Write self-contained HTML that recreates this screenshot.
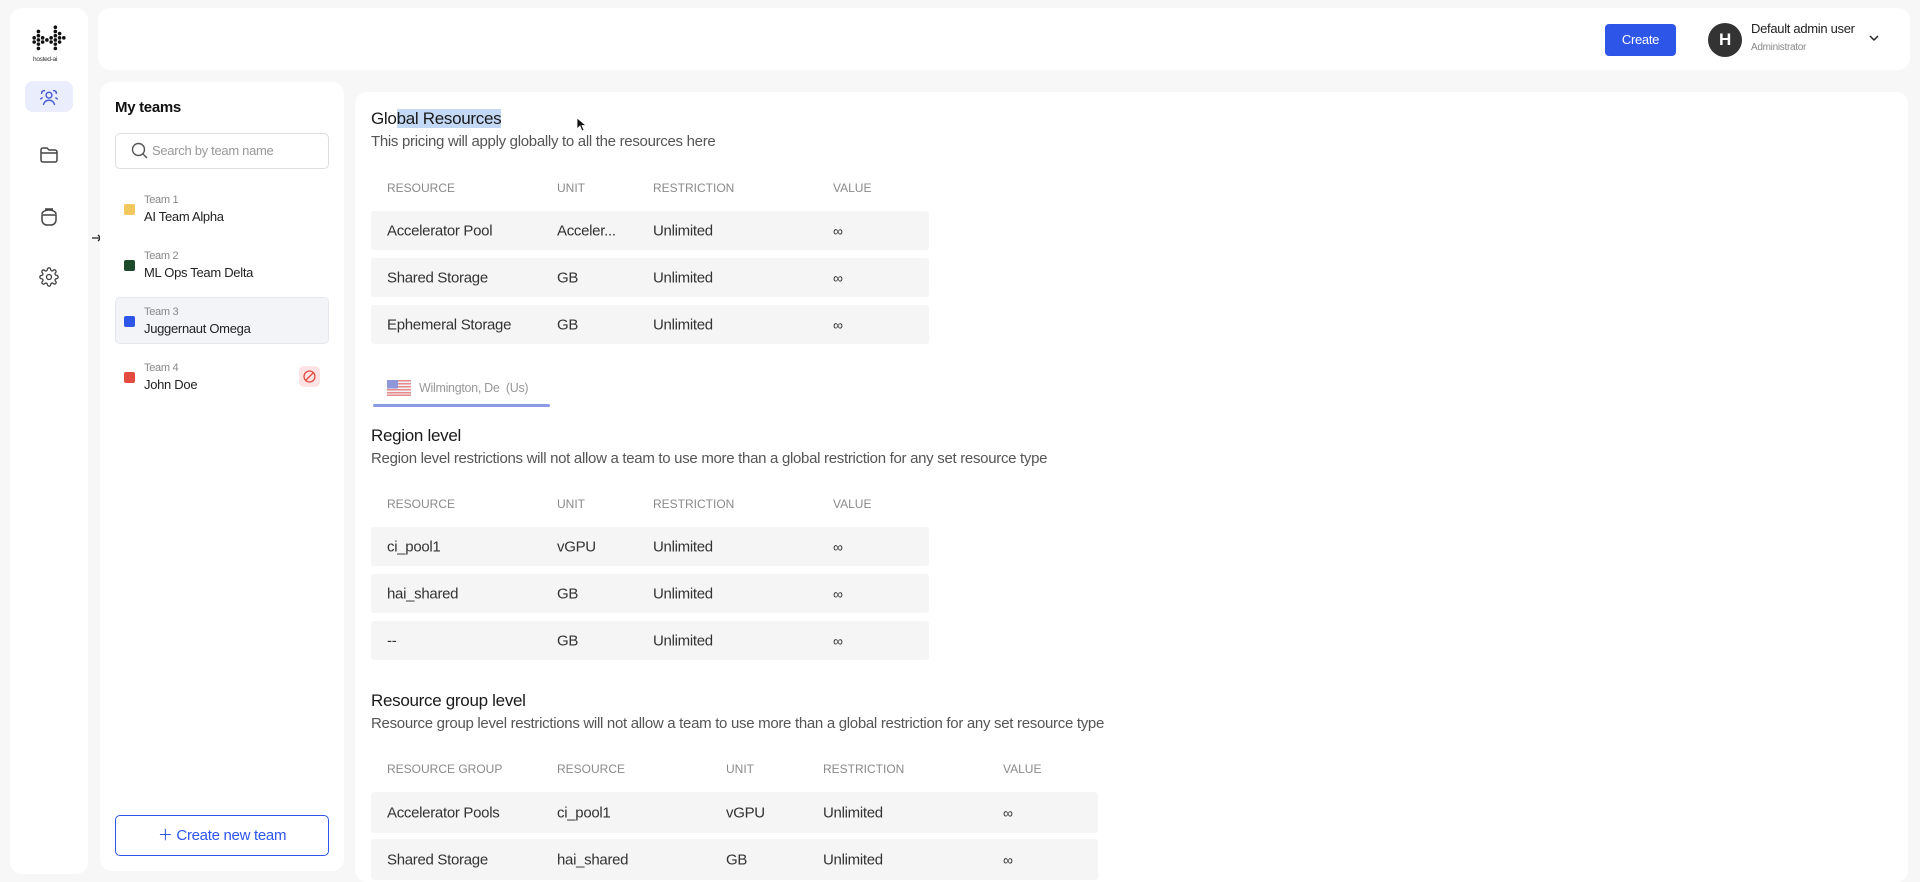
<!DOCTYPE html>
<html><head><meta charset="utf-8"><style>
*{margin:0;padding:0;box-sizing:border-box}
body{width:1920px;height:882px;overflow:hidden;background:#f7f7f8;font-family:"Liberation Sans",sans-serif;color:#222;position:relative;letter-spacing:-0.3px}
.a{position:absolute}
.card{position:absolute;background:#fff;border-radius:12px}
.th{position:absolute;font-size:12px;color:#8a8a8a;letter-spacing:0}
.row{position:absolute;background:#f5f5f5;border-radius:3px}
.c{position:absolute;font-size:15px;color:#333;top:50%;transform:translateY(-50%);white-space:nowrap}
.inf{font-size:14px}
.tl{position:absolute;font-size:11px;color:#888}
.tn{position:absolute;font-size:13px;color:#222}
.sq{position:absolute;width:11px;height:11px;border-radius:2px}
</style></head><body>
<div class="card" style="left:10px;top:8px;width:78px;height:866px"></div>
<!-- logo -->
<svg class="a" style="left:31px;top:25px" width="36" height="32" viewBox="0 0 34 30">
<g fill="#111">
<circle cx="3" cy="12" r="1.7"/><circle cx="7" cy="6" r="1.7"/><circle cx="7" cy="10" r="1.7"/><circle cx="7" cy="14" r="1.7"/><circle cx="7" cy="18" r="1.7"/><circle cx="7" cy="22" r="1.7"/>
<circle cx="11" cy="12" r="1.7"/><circle cx="11" cy="16" r="1.7"/><circle cx="15" cy="14" r="1.7"/><circle cx="19" cy="12" r="1.7"/>
<circle cx="23" cy="2" r="1.7"/><circle cx="23" cy="6" r="1.7"/><circle cx="23" cy="10" r="1.7"/><circle cx="23" cy="14" r="1.7"/><circle cx="23" cy="18" r="1.7"/><circle cx="23" cy="22" r="1.7"/>
<circle cx="27" cy="8" r="1.7"/><circle cx="27" cy="12" r="1.7"/><circle cx="27" cy="16" r="1.7"/><circle cx="31" cy="12" r="1.7"/><circle cx="19" cy="16" r="1.7"/><circle cx="3" cy="16" r="1.7"/>
</g></svg>
<div class="a" style="left:33px;top:56px;font-size:6.5px;color:#333">hosted-ai</div>
<div class="a" style="left:25px;top:81px;width:48px;height:31px;background:#eaedfb;border-radius:8px"></div>
<svg class="a" style="left:38px;top:86px" width="22" height="22" viewBox="0 0 24 24" fill="none" stroke="#4a5fd6" stroke-width="1.6" stroke-linecap="round"><circle cx="12" cy="10" r="3.2"/><path d="M6 20c1-3 3.5-4.5 6-4.5s5 1.5 6 4.5M4 8c0-2 1-3 3-3M20 8c0-2-1-3-3-3M3 14l1.5-1M21 14l-1.5-1"/></svg>
<svg class="a" style="left:39px;top:146px" width="20" height="18" viewBox="0 0 20 18" fill="none" stroke="#444" stroke-width="1.5"><path d="M2 4a2 2 0 0 1 2-2h4l2 2h6a2 2 0 0 1 2 2v8a2 2 0 0 1-2 2H4a2 2 0 0 1-2-2z M2 7h16"/></svg>
<svg class="a" style="left:40px;top:206px" width="18" height="20" viewBox="0 0 18 20" fill="none" stroke="#444" stroke-width="1.5"><path d="M5 3h8M2 8c0-2 3-4 7-4s7 2 7 4M2 9h14v5a5 5 0 0 1-5 5H7a5 5 0 0 1-5-5z"/></svg>
<svg class="a" style="left:39px;top:267px" width="20" height="20" viewBox="0 0 24 24" fill="none" stroke="#444" stroke-width="1.6"><circle cx="12" cy="12" r="3"/><path d="M19.4 15a1.7 1.7 0 0 0 .3 1.8l.1.1a2 2 0 1 1-2.8 2.8l-.1-.1a1.7 1.7 0 0 0-1.8-.3 1.7 1.7 0 0 0-1 1.5V21a2 2 0 1 1-4 0v-.1a1.7 1.7 0 0 0-1.1-1.5 1.7 1.7 0 0 0-1.8.3l-.1.1a2 2 0 1 1-2.8-2.8l.1-.1a1.7 1.7 0 0 0 .3-1.8 1.7 1.7 0 0 0-1.5-1H3a2 2 0 1 1 0-4h.1a1.7 1.7 0 0 0 1.5-1.1 1.7 1.7 0 0 0-.3-1.8l-.1-.1a2 2 0 1 1 2.8-2.8l.1.1a1.7 1.7 0 0 0 1.8.3H9a1.7 1.7 0 0 0 1-1.5V3a2 2 0 1 1 4 0v.1a1.7 1.7 0 0 0 1 1.5 1.7 1.7 0 0 0 1.8-.3l.1-.1a2 2 0 1 1 2.8 2.8l-.1.1a1.7 1.7 0 0 0-.3 1.8V9a1.7 1.7 0 0 0 1.5 1H21a2 2 0 1 1 0 4h-.1a1.7 1.7 0 0 0-1.5 1z"/></svg>
<svg class="a" style="left:91px;top:232px" width="16" height="12" viewBox="0 0 16 12" fill="none" stroke="#222" stroke-width="1.3"><path d="M1 6h8M7 3l3 3-3 3M13 1v10"/></svg>

<!-- header -->
<div class="card" style="left:98px;top:8px;width:1812px;height:62px"></div>
<div class="a" style="left:1605px;top:24px;width:71px;height:32px;background:#2d55e8;border-radius:4px;color:#fff;font-size:13px;line-height:32px;text-align:center">Create</div>
<div class="a" style="left:1708px;top:23px;width:34px;height:34px;border-radius:50%;background:#333;color:#fff;font-size:17px;font-weight:bold;line-height:34px;text-align:center">H</div>
<div class="a" style="left:1751px;top:21px;font-size:13px;color:#222">Default admin user</div>
<div class="a" style="left:1751px;top:42px;font-size:10px;color:#888">Administrator</div>
<svg class="a" style="left:1868px;top:34px" width="12" height="8" viewBox="0 0 12 8" fill="none" stroke="#222" stroke-width="1.5"><path d="M2 2l4 4 4-4"/></svg>

<!-- teams panel -->
<div class="card" style="left:100px;top:82px;width:244px;height:789px"></div>
<div class="a" style="left:115px;top:99px;font-size:15px;font-weight:bold;color:#111">My teams</div>
<div class="a" style="left:115px;top:133px;width:214px;height:36px;border:1px solid #ddd;border-radius:5px"></div>
<svg class="a" style="left:131px;top:142px" width="17" height="17" viewBox="0 0 17 17" fill="none" stroke="#555" stroke-width="1.4"><circle cx="7.5" cy="7.5" r="6"/><path d="M12 12l4 4"/></svg>
<div class="a" style="left:152px;top:143px;font-size:13px;color:#999">Search by team name</div>
<div class="sq" style="left:124px;top:204px;background:#f2c75c"></div>
<div class="tl" style="left:144px;top:194px">Team 1</div><div class="tn" style="left:144px;top:209px">AI Team Alpha</div>
<div class="sq" style="left:124px;top:260px;background:#1c4a2a"></div>
<div class="tl" style="left:144px;top:250px">Team 2</div><div class="tn" style="left:144px;top:265px">ML Ops Team Delta</div>
<div class="a" style="left:115px;top:297px;width:214px;height:47px;background:#f3f4f8;border:1px solid #e6e7ee;border-radius:5px"></div>
<div class="sq" style="left:124px;top:316px;background:#2d55e8"></div>
<div class="tl" style="left:144px;top:306px">Team 3</div><div class="tn" style="left:144px;top:321px">Juggernaut Omega</div>
<div class="sq" style="left:124px;top:372px;background:#e44b40"></div>
<div class="tl" style="left:144px;top:362px">Team 4</div><div class="tn" style="left:144px;top:377px">John Doe</div>
<div class="a" style="left:299px;top:366px;width:21px;height:21px;border-radius:5px;background:#fde3e3"></div>
<svg class="a" style="left:302px;top:369px" width="15" height="15" viewBox="0 0 15 15" fill="none" stroke="#e44b40" stroke-width="1.3"><circle cx="7.5" cy="7.5" r="5.5"/><path d="M4 11l7-7"/></svg>
<div class="a" style="left:115px;top:815px;width:214px;height:41px;border:1px solid #2d55e8;border-radius:5px;color:#2d55e8;font-size:15px;line-height:39px;text-align:center">＋ Create new team</div>

<!-- main -->
<div class="card" style="left:355px;top:92px;width:1553px;height:790px"></div>
<div class="a" style="left:371px;top:109px;font-size:17px;color:#1a1a1a">Glo<span style="background:#c3d9f5">bal Resources</span></div>
<svg class="a" style="left:576px;top:117px" width="10" height="15" viewBox="0 0 10 15"><path d="M1 1v11l3-3 2 5 2-1-2-4.5h4z" fill="#111" stroke="#fff" stroke-width=".8"/></svg>
<div class="a" style="left:371px;top:133px;font-size:15px;color:#555">This pricing will apply globally to all the resources here</div>
<div class="th" style="left:387px;top:181px">RESOURCE</div><div class="th" style="left:557px;top:181px">UNIT</div><div class="th" style="left:653px;top:181px">RESTRICTION</div><div class="th" style="left:833px;top:181px">VALUE</div>
<div class="row" style="left:371px;top:211px;width:558px;height:39px"><span class="c" style="left:16px">Accelerator Pool</span><span class="c" style="left:186px">Acceler...</span><span class="c" style="left:282px">Unlimited</span><span class="c inf" style="left:462px">∞</span></div>
<div class="row" style="left:371px;top:258px;width:558px;height:39px"><span class="c" style="left:16px">Shared Storage</span><span class="c" style="left:186px">GB</span><span class="c" style="left:282px">Unlimited</span><span class="c inf" style="left:462px">∞</span></div>
<div class="row" style="left:371px;top:305px;width:558px;height:39px"><span class="c" style="left:16px">Ephemeral Storage</span><span class="c" style="left:186px">GB</span><span class="c" style="left:282px">Unlimited</span><span class="c inf" style="left:462px">∞</span></div>

<svg class="a" style="left:387px;top:380px" width="24" height="16" viewBox="0 0 24 16"><rect width="24" height="16" fill="#f1f1f5"/><g fill="#e88a8a"><rect y="0" width="24" height="1.5"/><rect y="3" width="24" height="1.5"/><rect y="6" width="24" height="1.5"/><rect y="9" width="24" height="1.5"/><rect y="12" width="24" height="1.5"/><rect y="14.5" width="24" height="1.5"/></g><rect width="11" height="8.5" fill="#8f96d9"/></svg>
<div class="a" style="left:419px;top:381px;font-size:12.5px;color:#999">Wilmington, De&nbsp; (Us)</div>
<div class="a" style="left:373px;top:404px;width:177px;height:3px;background:#8d9ae6;border-radius:2px"></div>

<div class="a" style="left:371px;top:426px;font-size:17px;color:#1a1a1a">Region level</div>
<div class="a" style="left:371px;top:450px;font-size:15px;color:#555">Region level restrictions will not allow a team to use more than a global restriction for any set resource type</div>
<div class="th" style="left:387px;top:497px">RESOURCE</div><div class="th" style="left:557px;top:497px">UNIT</div><div class="th" style="left:653px;top:497px">RESTRICTION</div><div class="th" style="left:833px;top:497px">VALUE</div>
<div class="row" style="left:371px;top:527px;width:558px;height:39px"><span class="c" style="left:16px">ci_pool1</span><span class="c" style="left:186px">vGPU</span><span class="c" style="left:282px">Unlimited</span><span class="c inf" style="left:462px">∞</span></div>
<div class="row" style="left:371px;top:574px;width:558px;height:39px"><span class="c" style="left:16px">hai_shared</span><span class="c" style="left:186px">GB</span><span class="c" style="left:282px">Unlimited</span><span class="c inf" style="left:462px">∞</span></div>
<div class="row" style="left:371px;top:621px;width:558px;height:39px"><span class="c" style="left:16px">--</span><span class="c" style="left:186px">GB</span><span class="c" style="left:282px">Unlimited</span><span class="c inf" style="left:462px">∞</span></div>

<div class="a" style="left:371px;top:691px;font-size:17px;color:#1a1a1a">Resource group level</div>
<div class="a" style="left:371px;top:715px;font-size:15px;color:#555">Resource group level restrictions will not allow a team to use more than a global restriction for any set resource type</div>
<div class="th" style="left:387px;top:762px">RESOURCE GROUP</div><div class="th" style="left:557px;top:762px">RESOURCE</div><div class="th" style="left:726px;top:762px">UNIT</div><div class="th" style="left:823px;top:762px">RESTRICTION</div><div class="th" style="left:1003px;top:762px">VALUE</div>
<div class="row" style="left:371px;top:792px;width:727px;height:41px"><span class="c" style="left:16px">Accelerator Pools</span><span class="c" style="left:186px">ci_pool1</span><span class="c" style="left:355px">vGPU</span><span class="c" style="left:452px">Unlimited</span><span class="c inf" style="left:632px">∞</span></div>
<div class="row" style="left:371px;top:839px;width:727px;height:41px"><span class="c" style="left:16px">Shared Storage</span><span class="c" style="left:186px">hai_shared</span><span class="c" style="left:355px">GB</span><span class="c" style="left:452px">Unlimited</span><span class="c inf" style="left:632px">∞</span></div>
</body></html>
